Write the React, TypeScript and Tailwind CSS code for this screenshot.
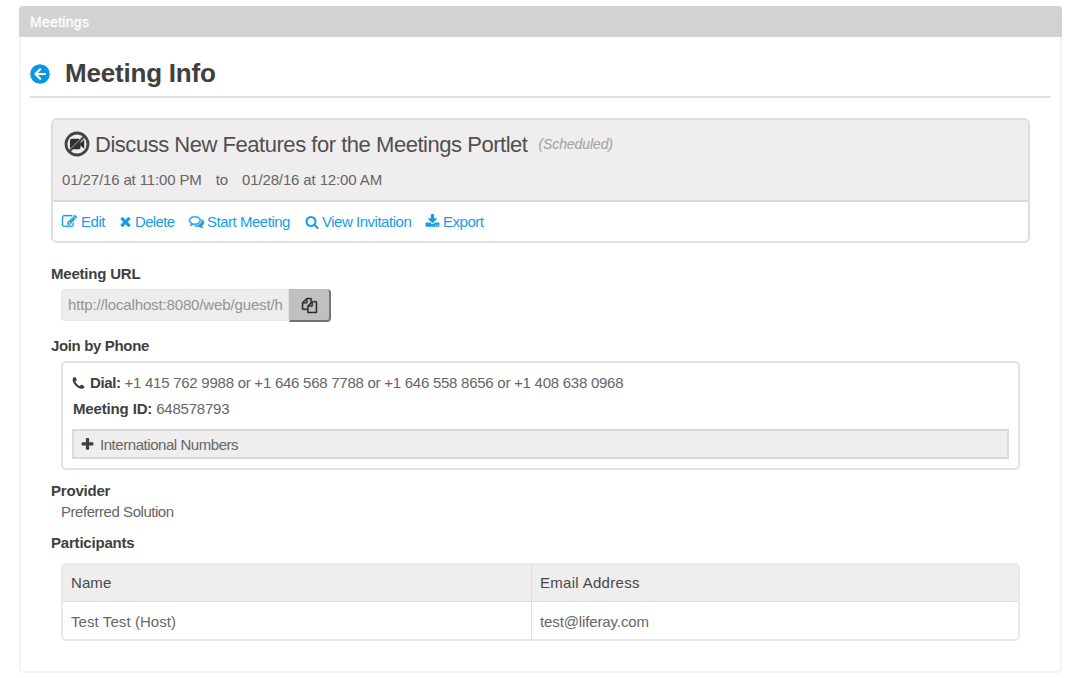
import React from "react";

const paths = {
  edit: "M888 1184l116-116-152-152-116 116v56h96v96h56zm440-720q-16-16-33 1l-350 350q-17 17-1 33t33-1l350-350q17-17 1-33zm80 594v190q0 119-84.5 203.5t-203.5 84.5h-832q-119 0-203.5-84.5t-84.5-203.5v-832q0-119 84.5-203.5t203.5-84.5h832q63 0 117 25 15 7 18 23 3 17-9 29l-49 49q-14 14-32 8-23-6-45-6h-832q-66 0-113 47t-47 113v832q0 66 47 113t113 47h832q66 0 113-47t47-113v-126q0-13 9-22l64-64q15-15 35-7t20 29zm-96-738l288 288-672 672h-288v-288zm444 132l-92 92-288-288 92-92q28-28 68-28t68 28l152 152q28 28 28 68t-28 68z",
  times: "M1490 1322q0 40-28 68l-136 136q-28 28-68 28t-68-28l-294-294-294 294q-28 28-68 28t-68-28l-136-136q-28-28-28-68t28-68l294-294-294-294q-28-28-28-68t28-68l136-136q28-28 68-28t68 28l294 294 294-294q28-28 68-28t68 28l136 136q28 28 28 68t-28 68l-294 294 294 294q28 28 28 68z",
  comments: "M704 384q-153 0-286 52t-211.5 141-78.5 191q0 82 53 158t149 132l97 56-35 84q34-20 62-39l44-31 53 10q78 14 153 14 153 0 286-52t211.5-141 78.5-191-78.5-191-211.5-141-286-52zm0-128q191 0 353.5 68.5t256.5 186.5 94 257-94 257-256.5 186.5-353.5 68.5q-86 0-176-16-124 88-278 128-36 9-86 16h-3q-11 0-20.5-8t-11.5-21q-1-3-1-6.5t.5-6.5 2-6l2.5-5 3.5-5.5 4-5 4.5-5 4-4.5q5-6 23-25t26-29.5 22.5-29 25-38.5 20.5-44q-124-72-195-177t-71-224q0-139 94-257t256.5-186.5 353.5-68.5zm822 1169q10 24 20.5 44t25 38.5 22.5 29 26 29.5 23 25q1 1 4 4.5t4.5 5 4 5 3.5 5.5l2.5 5 2 6 .5 6.5-1 6.5q-3 14-13 22t-22 7q-50-7-86-16-154-40-278-128-90 16-176 16-271 0-472-132 58 4 88 4 161 0 309-45t264-129q125-92 192-212t67-254q0-77-23-152 129 71 204 178t75 230q0 120-71 224.5t-195 176.5z",
  search: "M1216 832q0-185-131.5-316.5t-316.5-131.5-316.5 131.5-131.5 316.5 131.5 316.5 316.5 131.5 316.5-131.5 131.5-316.5zm512 832q0 52-38 90t-90 38q-54 0-90-38l-343-342q-179 124-399 124-143 0-273.5-55.5t-225-150-150-225-55.5-273.5 55.5-273.5 150-225 225-150 273.5-55.5 273.5 55.5 225 150 150 225 55.5 273.5q0 220-124 399l343 343q37 37 37 90z",
  download: "M1344 1344q0-26-19-45t-45-19-45 19-19 45 19 45 45 19 45-19 19-45zm256 0q0-26-19-45t-45-19-45 19-19 45 19 45 45 19 45-19 19-45zm128-224v320q0 40-28 68t-68 28h-1472q-40 0-68-28t-28-68v-320q0-40 28-68t68-28h465l135 136q58 56 136 56t136-56l136-136h464q40 0 68 28t28 68zm-325-569q17 41-14 70l-448 448q-18 19-45 19t-45-19l-448-448q-31-29-14-70 17-39 59-39h256v-448q0-26 19-45t45-19h256q26 0 45 19t19 45v448h256q42 0 59 39z",
  copy: "M1696 384q40 0 68 28t28 68v1216q0 40-28 68t-68 28h-960q-40 0-68-28t-28-68v-288h-544q-40 0-68-28t-28-68v-672q0-40 20-88t48-76l408-408q28-28 76-48t88-20h416q40 0 68 28t28 68v328q68-40 128-40h416zm-544 213l-299 299h299v-299zm-640-384l-299 299h299v-299zm196 647l316-316v-416h-384v416q0 40-28 68t-68 28h-416v640h512v-256q0-40 20-88t48-76zm956 804v-1152h-384v416q0 40-28 68t-68 28h-416v640h896z",
  phone: "M1600 1240q0 27-10 70.5t-21 68.5q-21 50-122 106-94 51-186 51-27 0-53-3.5t-57.5-12.5-47-14.5-55.5-20.5-49-18q-98-35-175-83-127-79-264-216t-216-264q-48-77-83-175-3-9-18-49t-20.5-55.5-14.5-47-12.5-57.5-3.5-53q0-92 51-186 56-101 106-122 25-11 68.5-21t70.5-10q14 0 21 3 18 6 53 76 11 19 30 54t35 63.5 31 53.5q3 4 17.5 25t21.5 35.5 7 28.5q0 20-28.5 50t-62 55-62 53-28.5 46q0 9 5 22.5t8.5 20.5 14 24 11.5 19q76 137 174 235t235 174q2 1 19 11.5t24 14 20.5 8.5 22.5 5q18 0 46-28.5t53-62 55-62 50-28.5q14 0 28.5 7t35.5 21.5 25 17.5q25 15 53.5 31t63.5 35 54 30q70 35 76 53 3 7 3 21z",
  plus: "M1600 736v192q0 40-28 68t-68 28h-416v416q0 40-28 68t-68 28h-192q-40 0-68-28t-28-68v-416h-416q-40 0-68-28t-28-68v-192q0-40 28-68t68-28h416v-416q0-40 28-68t68-28h192q40 0 68 28t28 68v416h416q40 0 68 28t28 68z",
};

function Icon({ name, className }: { name: keyof typeof paths; className: string }) {
  return (
    <svg viewBox="0 0 1792 1792" fill="currentColor" className={`shrink-0 overflow-visible ${className}`} aria-hidden="true">
      <path d={paths[name]} />
    </svg>
  );
}

function BackIcon() {
  return (
    <svg viewBox="0 0 20 20" fill="none" className="mt-px size-[20px] shrink-0" aria-hidden="true">
      <circle cx="10" cy="10" r="9.8" fill="#0a96e4" />
      <path d="M15 10H6M10.2 5.3 5.4 10l4.8 4.7" stroke="#fff" strokeWidth="2.1" strokeLinecap="round" strokeLinejoin="round" />
    </svg>
  );
}

function NoVideoIcon() {
  return (
    <svg viewBox="0 0 26 26" className="size-[26px] shrink-0 text-[#444]" aria-hidden="true">
      <rect x="6" y="7.8" width="10.5" height="10.4" rx="1.8" fill="#2e2e2e" />
      <path d="M16 12.5 20.2 8.5v9.2L16 14z" fill="#2e2e2e" />
      <path d="M4.8 19.2 19.2 4.8" stroke="#999" strokeWidth="1" />
      <path d="M5 21 21 5" stroke="currentColor" strokeWidth="1.8" />
      <circle cx="13" cy="13" r="11" fill="none" stroke="currentColor" strokeWidth="2.8" />
    </svg>
  );
}

function Label({ children, className }: { children: React.ReactNode; className: string }) {
  return <h2 className={`text-[15px] leading-5 font-bold text-[#3f3f3f] ${className}`}>{children}</h2>;
}

export default function App() {
  return (
    <div className="h-[678px] w-[1080px] overflow-hidden bg-white pt-[6px] pl-[19px] font-['Liberation_Sans',Arial,sans-serif] text-[15px] leading-5 whitespace-nowrap text-[#666]">
      <section className="flex h-[667px] w-[1043px] flex-col rounded-[4px] border-2 border-t-0 border-[#f4f4f4]">
        <header className="-mx-[2px] flex h-[31px] shrink-0 items-center rounded-t-[4px] bg-[#d2d2d2] pl-[11px] text-[14px] text-white">
          <span className="tracking-[0.3px] [-webkit-text-stroke:0.35px_white]">Meetings</span>
        </header>

        <div className="mx-[9px] flex h-[61px] shrink-0 items-center border-b-2 border-[#e0e0e0] pt-[13px]">
          <BackIcon />
          <h1 className="ml-[15px] text-[26px] leading-8 font-bold tracking-[-0.2px] text-[#404040]">Meeting Info</h1>
        </div>

        <div className="ml-[30px] flex flex-col">
          <article className="mt-[20px] flex h-[125px] w-[979px] flex-col overflow-hidden rounded-[6px] border-2 border-[#dedede]">
            <div className="h-[82px] border-b-2 border-[#dadada] bg-[#efedee] pt-[10px]">
              <div className="flex h-[28px] items-center pl-[11px]">
                <NoVideoIcon />
                <h2 className="relative top-px ml-[5px] text-[22px] tracking-[-0.47px] text-[#505050]">Discuss New Features for the Meetings Portlet</h2>
                <span className="ml-[11px] text-[14px] tracking-[-0.1px] text-[#a0a0a0] italic">(Scheduled)</span>
              </div>
              <div className="mt-[12px] flex pl-[9px] tracking-[-0.13px]">
                <span>01/27/16 at 11:00 PM</span>
                <span className="ml-[14px]">to</span>
                <span className="ml-[14px]">01/28/16 at 12:00 AM</span>
              </div>
            </div>
            <nav className="flex flex-1 items-center pl-[9px] tracking-[-0.48px] text-[#179de8]">
              <a className="flex w-[58px] items-center"><Icon name="edit" className="mr-[4px] size-[15px] stroke-current stroke-[40]" />Edit</a>
              <a className="flex w-[69px] items-center tracking-[-0.65px]"><Icon name="times" className="mr-[2px] -ml-[2px] size-[15px]" />Delete</a>
              <a className="flex w-[116px] items-center"><Icon name="comments" className="mr-[3px] size-[15px] stroke-current stroke-[50]" />Start Meeting</a>
              <a className="flex w-[120px] items-center"><Icon name="search" className="mr-[3px] size-[14px]" />View Invitation</a>
              <a className="flex items-center"><Icon name="download" className="mr-[3px] size-[15px]" />Export</a>
            </nav>
          </article>

          <Label className="mt-[21px] tracking-[-0.2px]">Meeting URL</Label>
          <div className="mt-[5px] ml-[10px] flex">
            <div className="flex h-[32px] w-[228px] items-center overflow-hidden rounded-l-[4px] border border-[#e4e4e4] bg-[#ededed] pl-[6px] tracking-[-0.14px] text-[#949494]">http://localhost:8080/web/guest/h</div>
            <button className="flex h-[33px] w-[42px] items-center justify-center rounded-r-[4px] border border-r-2 border-b-2 border-[#bcbcbc] border-r-[#777] border-b-[#707070] bg-[#c0c0c0] text-[#2c2c2c]">
              <Icon name="copy" className="size-[15px] stroke-current stroke-[60]" />
            </button>
          </div>

          <Label className="mt-[14px] tracking-[-0.35px]">Join by Phone</Label>
          <div className="mt-[5px] ml-[10px] h-[109px] w-[959px] rounded-[5px] border-2 border-[#e2e2e2] px-[9px] pt-[10px]">
            <p className="flex items-center">
              <Icon name="phone" className="-ml-[1px] size-[15px] text-[#3f3f3f]" />
              <b className="ml-[4px] tracking-[-0.4px] text-[#3f3f3f]">Dial:</b>
              <span className="ml-[4px] tracking-[-0.255px]">+1 415 762 9988 or +1 646 568 7788 or +1 646 558 8656 or +1 408 638 0968</span>
            </p>
            <p className="mt-[6px] flex pl-px">
              <b className="tracking-[-0.15px] text-[#3f3f3f]">Meeting ID:</b>
              <span className="ml-[4px] tracking-[-0.22px]">648578793</span>
            </p>
            <div className="mt-[10px] flex h-[30px] items-center border-2 border-[#dadada] bg-[#efedee] pl-[6px]">
              <Icon name="plus" className="size-[15px] text-[#3f3f3f]" />
              <span className="relative top-px ml-[5px] tracking-[-0.45px]">International Numbers</span>
            </div>
          </div>

          <Label className="mt-[11px] tracking-[-0.2px]">Provider</Label>
          <p className="mt-px ml-[10px] tracking-[-0.46px]">Preferred Solution</p>

          <Label className="mt-[11px] tracking-[-0.2px]">Participants</Label>
          <div className="mt-[10px] ml-[10px] grid h-[78px] w-[959px] grid-cols-[469px_1fr] grid-rows-[37px_1fr] overflow-hidden rounded-[5px] border-2 border-[#e8e8e8]">
            <div className="flex items-center border-r border-b border-[#dedede] bg-[#efedee] pl-[8px] text-[#484848]"><span className="tracking-[0.1px]">Name</span></div>
            <div className="flex items-center border-b border-[#dedede] bg-[#efedee] pl-[8px] tracking-[0.3px] text-[#484848]"><span>Email Address</span></div>
            <div className="flex items-center border-r border-[#dedede] pt-[2px] pl-[8px] tracking-[0.08px]"><span>Test Test (Host)</span></div>
            <div className="flex items-center pt-[2px] pl-[8px] tracking-[-0.12px]"><span>test@liferay.com</span></div>
          </div>
        </div>
      </section>
    </div>
  );
}
